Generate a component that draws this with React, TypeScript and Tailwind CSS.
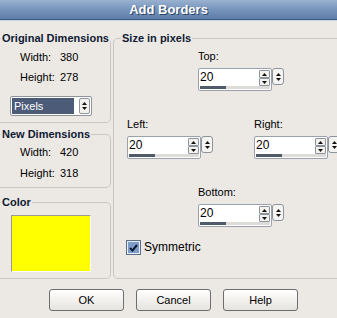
import React from "react";

const font = { fontFamily: '"Liberation Sans", Arial, sans-serif' };

function Arrow({ dir }: { dir: "up" | "down" }) {
  return (
    <svg width="5" height="3" viewBox="0 0 5 3" className="block">
      {dir === "up" ? <path d="M0 3 L2.5 0 L5 3 Z" fill="#111" /> : <path d="M0 0 L2.5 3 L5 0 Z" fill="#111" />}
    </svg>
  );
}

function Spinner({ value }: { value: string }) {
  return (
    <div className="flex items-start">
      <div className="flex h-[23px] w-[74px] flex-col rounded-[2px] border border-[#9aa3ad] bg-white">
        <div className="flex flex-1">
          <span className="flex-1 pl-[1px] pt-[1px] text-[12px] leading-[14px] text-black">{value}</span>
          <div className="mr-[1px] mt-[1px] flex w-[11px] flex-col">
            <div className="flex h-[8px] items-center justify-center rounded-[1px] border border-[#8d939a] bg-[#f3f2ef]">
              <Arrow dir="up" />
            </div>
            <div className="flex h-[8px] items-center justify-center rounded-[1px] border border-[#8d939a] bg-[#f3f2ef]">
              <Arrow dir="down" />
            </div>
          </div>
        </div>
        <div className="mx-[1px] mb-[1px] flex h-[3px]">
          <div className="w-[26px] bg-[#4f5b6b]" />
          <div className="flex-1 bg-[#dedcd8]" />
        </div>
      </div>
      <div className="flex h-[17px] w-[12px] flex-col items-center justify-center gap-[2px] rounded-[3px] border border-[#8d939a] bg-[#f5f4f1]">
        <Arrow dir="up" />
        <Arrow dir="down" />
      </div>
    </div>
  );
}

function Group({
  title,
  className,
  titleClass,
  children,
}: {
  title: string;
  className: string;
  titleClass: string;
  children?: React.ReactNode;
}) {
  return (
    <div className={"border-y border-r border-[#cbc7c0] " + className}>
      <div
        className={
          "-mt-[7px] w-fit whitespace-nowrap bg-[#ece9e5] px-[1px] text-[11px] font-bold leading-[13px] text-[#0f1a33] " +
          titleClass
        }
      >
        {title}
      </div>
      {children}
    </div>
  );
}

function Pair({ label, value }: { label: string; value: string }) {
  return (
    <div className="flex text-[11px] leading-[14px] text-black">
      <span className="w-[40px] pl-[20px] box-content">{label}</span>
      <span>{value}</span>
    </div>
  );
}

function Button({ children }: { children: React.ReactNode }) {
  return (
    <button className="h-[22px] w-[75px] rounded-[3px] border border-[#6e6e6e] bg-gradient-to-b from-[#ffffff] to-[#e6e3de] text-[11px] text-black">
      {children}
    </button>
  );
}

export default function App() {
  return (
    <div style={font} className="flex h-[318px] w-[337px] flex-col overflow-hidden bg-[#ece9e5]">
      <div className="flex h-[20px] items-center justify-center border-b border-[#3e5b82] bg-gradient-to-b from-[#9ab2d0] via-[#7693bb] to-[#5d7ea9] text-[13px] font-bold text-white [text-shadow:1px_1px_0_#2d4466]">
        Add Borders
      </div>
      <div className="h-[1px] bg-[#c9d4e2]" />

      <div className="flex gap-[2px]">
        <div className="flex w-[111px] shrink-0 flex-col">
          <Group title="Original Dimensions" titleClass="ml-[1px]" className="mt-[17px] h-[85px] rounded-r-[5px]">
            <div className="mt-[5px] flex flex-col gap-[6px]">
              <Pair label="Width:" value="380" />
              <Pair label="Height:" value="278" />
            </div>
            <div className="ml-[10px] mt-[12px] flex h-[20px] w-[82px] items-center rounded-[2px] border border-[#8d949c] bg-white px-[1px]">
              <div className="h-[16px] w-[62px] bg-[#4c5c78] pl-[2px] text-[11px] leading-[16px] text-white">Pixels</div>
              <div className="ml-auto flex h-[16px] w-[11px] flex-col items-center justify-center gap-[2px] rounded-[2px] border border-[#8d949c] bg-[#f3f2ef]">
                <Arrow dir="up" />
                <Arrow dir="down" />
              </div>
            </div>
          </Group>

          <Group title="New Dimensions" titleClass="ml-[1px]" className="mt-[11px] h-[54px] rounded-r-[5px]">
            <div className="mt-[4px] flex flex-col gap-[7px]">
              <Pair label="Width:" value="420" />
              <Pair label="Height:" value="318" />
            </div>
          </Group>

          <Group title="Color" titleClass="ml-[1px]" className="mt-[14px] h-[77px] rounded-r-[5px]">
            <div className="ml-[11px] mt-[6px] h-[57px] w-[80px] border border-b-white border-l-[#9d9a94] border-r-white border-t-[#9d9a94] bg-[#ffff00]" />
          </Group>
        </div>

        <Group
          title="Size in pixels"
          titleClass="ml-[7px]"
          className="mt-[17px] h-[241px] w-[240px] shrink-0 rounded-[5px] border-l"
        >
          <div className="flex flex-col text-[11px] leading-[13px] text-black">
            <div className="ml-[84px] mt-[5px] flex flex-col gap-[5px]">
              <span>Top:</span>
              <Spinner value="20" />
            </div>
            <div className="ml-[13px] mt-[27px] flex gap-[41px]">
              <div className="flex flex-col gap-[5px]">
                <span>Left:</span>
                <Spinner value="20" />
              </div>
              <div className="flex flex-col gap-[5px]">
                <span>Right:</span>
                <Spinner value="20" />
              </div>
            </div>
            <div className="ml-[84px] mt-[27px] flex flex-col gap-[5px]">
              <span>Bottom:</span>
              <Spinner value="20" />
            </div>
            <div className="ml-[13px] mt-[14px] flex items-center gap-[4px]">
              <div className="flex h-[13px] w-[13px] items-center justify-center border border-[#e8eef7] bg-[#7f9bc7] outline outline-1 outline-[#5d6e88]">
                <svg width="9" height="8" viewBox="0 0 9 8">
                  <path d="M1 4 L3.5 6.5 L8 1" stroke="#0d1a30" strokeWidth="2" fill="none" />
                </svg>
              </div>
              <span className="text-[12px]">Symmetric</span>
            </div>
          </div>
        </Group>
      </div>

      <div className="ml-[49px] mt-[10px] flex gap-[12px]">
        <Button>OK</Button>
        <Button>Cancel</Button>
        <Button>Help</Button>
      </div>
    </div>
  );
}
